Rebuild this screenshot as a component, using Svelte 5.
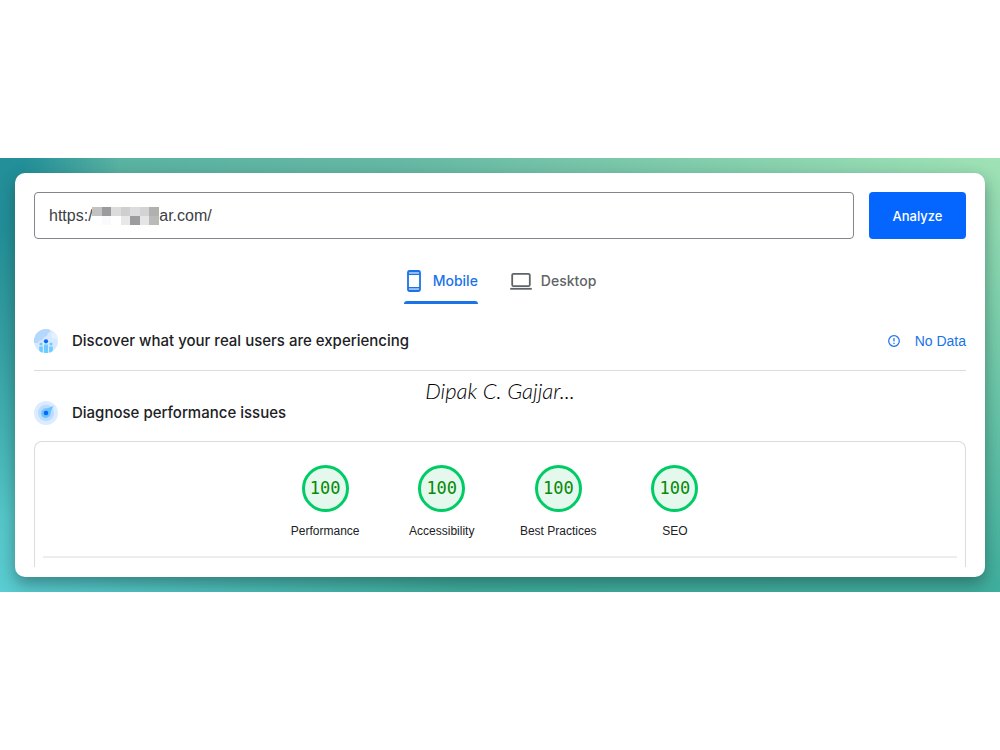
<script lang="ts">
type Device = 'mobile' | 'desktop';

// Trailing gap in the host is covered by the mosaic.
let url = $state('https:/' + '\u00a0'.repeat(15) + 'ar.com/');
let device = $state<Device>('mobile');

const scores = [
  { label: 'Performance', value: 100 },
  { label: 'Accessibility', value: 100 },
  { label: 'Best Practices', value: 100 },
  { label: 'SEO', value: 100 },
];

const mosaic = [
  ['#c2c2c3', '#9b9b9d', '#dcdcdc', '#cfcfd0', '#dcdcdc', '#d3d3d4', '#b0b0b1'],
  ['#fefefe', '#fafafa', '#ffffff', '#e8e8e8', '#9c9c9e', '#e5e5e5', '#bababb'],
];
</script>

<main class="page">
	<div class="band">
		<div class="card">
			<form class="search" onsubmit={(e) => e.preventDefault()}>
				<div class="field">
					<input type="text" aria-label="Web page URL" bind:value={url} />
					<svg class="mosaic" viewBox="0 0 70 18" preserveAspectRatio="none" shape-rendering="crispEdges" aria-hidden="true">
						{#each mosaic as row, y}
							{#each row as fill, x}
								<rect x={x * 10} y={y * 9} width="10" height="9" {fill} />
							{/each}
						{/each}
					</svg>
				</div>
				<button type="submit" class="analyze">Analyze</button>
			</form>

			<div class="tabs" role="tablist">
				<button type="button" class="tab" role="tab" aria-selected={device === 'mobile'} onclick={() => (device = 'mobile')}>
					<svg width="20" height="24" viewBox="0 0 20 24" fill="none" stroke="currentColor" aria-hidden="true">
						<rect x="4" y="2" width="12" height="20" rx="1.5" stroke-width="1.8" />
						<path d="M4 5.2h12M4 18.8h12" stroke-width="1.6" />
						<path d="M4.5 3.4h11M4.5 20.6h11" stroke-width="1.2" opacity=".45" />
					</svg>
					Mobile
				</button>
				<button type="button" class="tab" role="tab" aria-selected={device === 'desktop'} onclick={() => (device = 'desktop')}>
					<svg width="22" height="24" viewBox="0 0 22 24" fill="none" stroke="currentColor" aria-hidden="true">
						<rect x="2.2" y="4.8" width="17.6" height="12.4" rx="1.4" stroke-width="1.8" />
						<path d="M.2 19.8h21.6" stroke-width="1.8" />
					</svg>
					Desktop
				</button>
			</div>

			<section class="row field-data">
				<svg width="24" height="24" viewBox="0 0 24 24" aria-hidden="true">
					<clipPath id="disc"><circle cx="12" cy="12" r="12" /></clipPath>
					<g clip-path="url(#disc)">
						<rect width="24" height="24" fill="#d6e9ff" />
						<path d="M0 0h15.5l1 3-2.5 1-1 3-3 1-2 3-3 1-1 2H0z" fill="#b5d6fd" />
						<path d="M17 4l4-1 3 5v4l-3-2-3-1z" fill="#e4f0ff" />
						<path d="M5.2 17.5h3.6V24H5.2zM10 15.5h4V24h-4zM15.2 17.5h3.6V24h-3.6z" fill="#6dcbff" />
						<circle cx="7" cy="15" r="1.6" fill="#6dcbff" />
						<circle cx="17" cy="15" r="1.6" fill="#6dcbff" />
						<circle cx="12" cy="12.3" r="2.1" fill="#0768fb" />
					</g>
				</svg>
				<h2>Discover what your real users are experiencing</h2>
				<a class="no-data" href="#no-data">
					<svg width="14" height="14" viewBox="0 0 14 14" fill="none" stroke="currentColor" aria-hidden="true">
						<circle cx="7" cy="7" r="5.3" stroke-width="1.2" />
						<path d="M7 4v3.6M7 8.8v1.3" stroke-width="1.2" />
					</svg>
					No Data
				</a>
			</section>

			<section class="row lab-data">
				<svg width="24" height="24" viewBox="0 0 24 24" aria-hidden="true">
					<circle cx="12" cy="12" r="12" fill="#dcecff" />
					<circle cx="12" cy="12" r="8.2" fill="#bddbff" />
					<circle cx="12" cy="12" r="5" fill="#94c5ff" />
					<path d="M9.3 9.3L19.5 4.8l-4.8 10.2a4 4 0 1 1-5.4-5.7z" fill="#66c4ff" />
					<circle cx="12" cy="12" r="2.3" fill="#0768fb" />
				</svg>
				<h2>Diagnose performance issues</h2>
				<span class="signature">Dipak C. Gajjar...</span>
			</section>

			<div class="report">
				<ul class="gauges">
					{#each scores as score}
						<li>
							<span class="gauge">{score.value}</span>
							<span class="label">{score.label}</span>
						</li>
					{/each}
				</ul>
				<hr />
			</div>
		</div>
	</div>
</main>

<style>
	:global(body) {
		background: #fff;
	}

	.page {
		min-height: 100vh;
		display: flex;
		align-items: center;
		font-family: 'Liberation Sans', Arial, sans-serif;
		color: #202124;
	}

	.band {
		flex: 1;
		padding: 15px;
		overflow: hidden;
		background:
			radial-gradient(ellipse 120px 360px at 0 0, #238f99 20%, #238f9900 100%),
			radial-gradient(ellipse 460px 420px at 0 100%, #5acdd3 0%, #5acdd300 100%),
			linear-gradient(to bottom, #3fae9d00 0%, #3fae9d 100%),
			linear-gradient(to right, #55b0a0, #66b8a4 40%, #a0e2b5);
	}

	.card {
		background: #fff;
		border-radius: 10px;
		padding: 19px 19px 10px;
		box-shadow: 0 7px 16px rgba(20, 50, 50, 0.45);
	}

	.search {
		display: flex;
		gap: 15px;
	}

	.field {
		position: relative;
		flex: 1;
	}

	.field input {
		box-sizing: border-box;
		width: 100%;
		height: 47px;
		padding: 0 14px;
		border: 1px solid #80868b;
		border-radius: 4px;
		background: #fff;
		color: #3c4043;
		font: 16px 'Liberation Sans', Arial, sans-serif;
	}

	.mosaic {
		position: absolute;
		left: 58px;
		top: 15px;
		width: 67px;
		height: 18px;
	}

	.analyze {
		width: 97px;
		height: 47px;
		padding: 0;
		border: none;
		border-radius: 4px;
		background: #0566ff;
		color: #fff;
		font: 500 13px Inter, sans-serif;
		cursor: pointer;
	}

	.tabs {
		display: flex;
		justify-content: center;
		gap: 32px;
		padding-top: 18px;
	}

	.tab {
		position: relative;
		display: flex;
		align-items: center;
		gap: 9px;
		height: 47px;
		padding: 0;
		border: none;
		background: none;
		color: #5f6368;
		font: 500 14px Inter, sans-serif;
		cursor: pointer;
	}

	.tab[aria-selected='true'] {
		color: #1a73e8;
	}

	.tab[aria-selected='true']::after {
		content: '';
		position: absolute;
		left: 0;
		right: 0;
		bottom: 0;
		height: 3px;
		border-radius: 3px 3px 0 0;
		background: #1a73e8;
	}

	.row {
		position: relative;
		display: flex;
		align-items: center;
		gap: 14px;
	}

	.field-data {
		height: 58px;
		padding-top: 8px;
		border-bottom: 1px solid #dadce0;
	}

	.lab-data {
		height: 56px;
		padding-top: 14px;
	}

	h2 {
		margin: 0;
		font: 500 15px/20px Inter, sans-serif;
	}

	.no-data {
		display: flex;
		align-items: center;
		gap: 14px;
		margin-left: auto;
		color: #1a73e8;
		font-size: 14px;
		text-decoration: none;
	}

	.signature {
		position: absolute;
		left: 0;
		right: 0;
		top: 0;
		text-align: center;
		color: #000;
		font: italic 300 22px/40px Lato, cursive;
		pointer-events: none;
	}

	.report {
		border: 1px solid #dadce0;
		border-bottom: none;
		border-radius: 8px 8px 0 0;
		padding: 23px 8px 9px;
	}

	.gauges {
		display: grid;
		grid-template-columns: repeat(4, 1fr);
		width: 51%;
		margin: 0 auto;
		padding: 0;
		list-style: none;
	}

	.gauges li {
		display: flex;
		flex-direction: column;
		align-items: center;
		gap: 11px;
	}

	.gauge {
		box-sizing: border-box;
		width: 47px;
		height: 47px;
		border: 3px solid #00cc66;
		border-radius: 50%;
		background: #e4f8ee;
		color: #078a07;
		font: 17px/41px 'DejaVu Sans Mono', monospace;
		text-align: center;
	}

	.label {
		font-size: 12px;
		line-height: 16px;
	}

	hr {
		height: 2px;
		margin: 17px 0 0;
		border: none;
		background: #ededed;
	}
</style>
